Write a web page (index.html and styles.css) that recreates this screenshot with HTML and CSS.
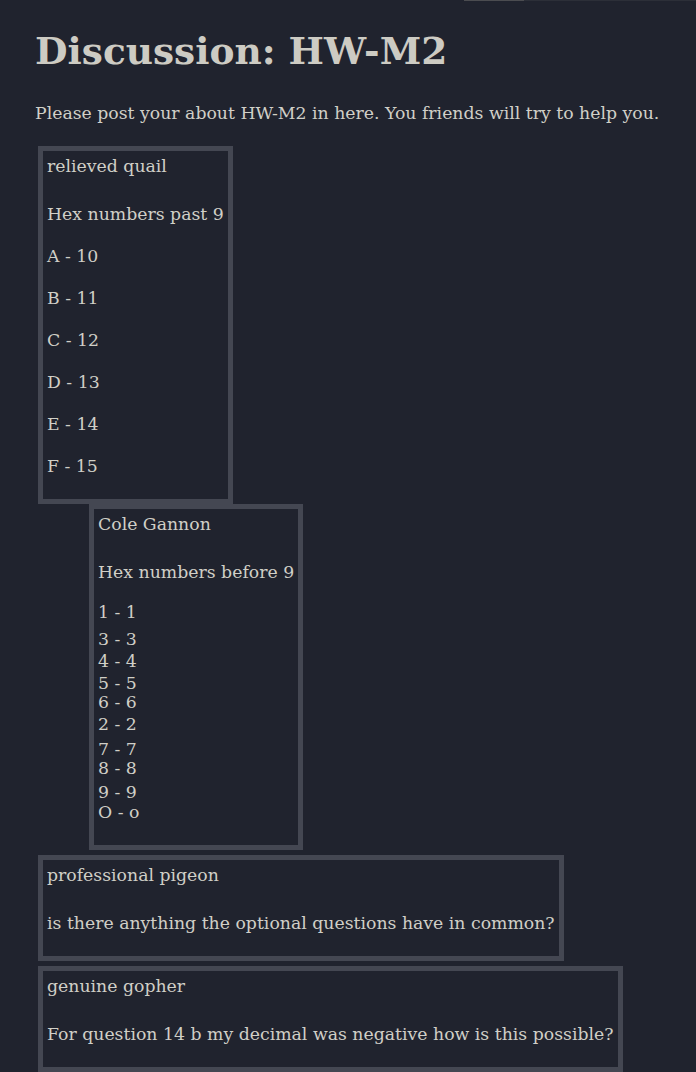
FILE: index.html
```html
<!DOCTYPE html>
<html lang="en">
<head>
<meta charset="utf-8">
<title>Discussion: HW-M2</title>
<link rel="stylesheet" href="styles.css">
</head>
<body>
<div class="topbar"><span class="tab"></span><span class="rest"></span></div>
<main class="page">
  <h1 class="title">Discussion: HW-M2</h1>
  <p class="intro">Please post your about HW-M2 in here. You friends will try to help you.</p>

  <div class="post">
    <div class="author">relieved quail</div>
    <p>Hex numbers past 9</p>
    <p>A - 10</p>
    <p>B - 11</p>
    <p>C - 12</p>
    <p>D - 13</p>
    <p>E - 14</p>
    <p>F - 15</p>
  </div>

  <div class="post reply">
    <div class="author">Cole Gannon</div>
    <p>Hex numbers before 9</p>
    <div class="numbers">
      <div class="ln">1 - 1</div>
      <div class="ln g7">3 - 3</div>
      <div class="ln g2">4 - 4</div>
      <div class="ln g2">5 - 5</div>
      <div class="ln gm2">6 - 6</div>
      <div class="ln g2">2 - 2</div>
      <div class="ln g5">7 - 7</div>
      <div class="ln gm1">8 - 8</div>
      <div class="ln g4">9 - 9</div>
      <div class="ln">O - o</div>
    </div>
  </div>

  <div class="post spaced">
    <div class="author">professional pigeon</div>
    <p>is there anything the optional questions have in common?</p>
  </div>

  <div class="post spaced">
    <div class="author">genuine gopher</div>
    <p>For question 14 b my decimal was negative how is this possible?</p>
  </div>
</main>
</body>
</html>
```

FILE: styles.css
```css
html, body {
  margin: 0;
  padding: 0;
  background: #20232e;
}

body {
  color: #d0cfc7;
  font-family: "DejaVu Serif", "Liberation Serif", serif;
  font-size: 17.3px;
  min-height: 1072px;
  position: relative;
}

.topbar {
  position: absolute;
  top: 0;
  left: 464px;
  right: 0;
  height: 1px;
  display: flex;
}

.topbar .tab {
  width: 60px;
  background: #4b4c50;
}

.topbar .rest {
  flex: 1;
  background: #2c2f38;
}

.page {
  padding: 27px 10px 0 35px;
}

.title {
  margin: 0;
  font-size: 37.5px;
  line-height: 48px;
  font-weight: bold;
  color: #cdcbc3;
}

.intro {
  margin: 26px 0 0 0;
  line-height: 24px;
  white-space: nowrap;
}

.post {
  width: fit-content;
  border: 5px solid #444752;
  padding: 3px 4px;
  margin: 21px 0 0 3px;
  line-height: 24px;
}

.post.reply {
  margin-top: 0;
  margin-left: 54px;
}

.post.spaced {
  margin-top: 5px;
}

.author {
  margin-bottom: 24px;
}

.post p {
  margin: 18px 0;
}

.post .author + p {
  margin-top: 0;
}

.numbers {
  margin: 18px 0 20px 0;
}

.ln {
  line-height: 20px;
}

.g7 { margin-top: 7px; }
.g5 { margin-top: 5px; }
.g4 { margin-top: 4px; }
.g2 { margin-top: 2px; }
.gm1 { margin-top: -1px; }
.gm2 { margin-top: -1px; }
```
